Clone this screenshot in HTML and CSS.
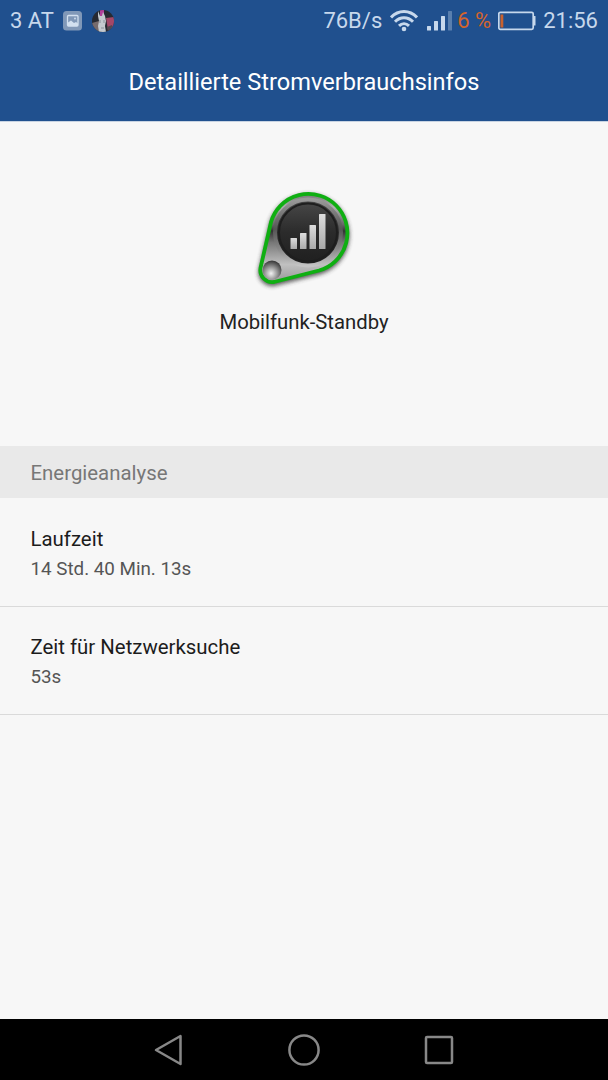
FILE: index.html
```html
<!DOCTYPE html>
<html lang="de">
<head>
    <meta charset="UTF-8">
    <meta name="viewport" content="width=device-width, initial-scale=1.0">
    <title>Detaillierte Stromverbrauchsinfos</title>
    <link rel="stylesheet" href="styles.css">
</head>
<body>
    <header class="header">
        <div class="status">
            <span class="carrier">3 AT</span>
            <svg class="gallery" width="20" height="20" viewBox="0 0 20 20">
                <rect x="0" y="0" width="19" height="19.500" rx="3.5" fill="#8098b8"/>
                <rect x="4.500" y="4.500" width="10.500" height="10.500" rx="1" fill="none" stroke="#d2e0f0" stroke-width="1.3"/>
                <path d="M5 11.500l3-2 3 2.500 2-1 2 1.500v2.500H5z" fill="#d2e0f0"/>
                <circle cx="12" cy="7.500" r="0.900" fill="#d2e0f0"/>
            </svg>
            <svg class="avatar" width="22" height="22" viewBox="0 0 22 22">
                <clipPath id="round"><circle cx="11" cy="11" r="11"/></clipPath>
                <g clip-path="url(#round)">
                    <rect width="22" height="22" fill="#262a32"/>
                    <path d="M14 8l8-1v10l-6 3z" fill="#a34768"/>
                    <path d="M0 13l7-2 2 11H0z" fill="#766b6c"/>
                    <path d="M8 0h4v7H8z" fill="#b0409a"/>
                    <path d="M6 1l2 5h2l1-4 2 4 1 5-1 5 1 6H7l-1-6 1-5-1-5z" fill="#c4c9cf"/>
                    <path d="M8 10v3M12 10v3M9 18h3" stroke="#8b929b" stroke-width="1"/>
                    <path d="M15 17l5-2v4l-4 3z" fill="#51484f"/>
                </g>
            </svg>
            <span class="speed">76B/s</span>
            <svg class="wifi" width="28" height="22" viewBox="0 0 28 22">
                <g fill="none" stroke="#c7d8ec" stroke-width="3">
                    <path d="M1 7.500C8.500 -0.500 19.500 -0.500 27 7.500"/>
                    <path d="M5 11.700c5.300-5.300 12.700-5.300 18 0"/>
                    <path d="M9 15.800c3-2.900 7-2.900 10 0"/>
                </g>
                <circle cx="14" cy="19" r="2.300" fill="#c7d8ec"/>
            </svg>
            <svg class="signal" width="25" height="20" viewBox="0 0 25 20">
                <g fill="#c7d8ec">
                    <rect x="0" y="15" width="4" height="4.500" rx="0.5"/>
                    <rect x="7" y="10" width="4" height="9.500" rx="0.5"/>
                    <rect x="14" y="5" width="4" height="14.500" rx="0.5"/>
                    <rect x="21" y="0" width="4" height="19.500" rx="0.5" opacity="0.35"/>
                </g>
            </svg>
            <span class="percent">6 %</span>
            <svg class="battery" width="38" height="20" viewBox="0 0 38 20">
                <rect x="0.800" y="1.300" width="34.400" height="17" rx="1.500" fill="none" stroke="#c7d8ec" stroke-width="1.700"/>
                <rect x="35.500" y="5" width="2" height="9.500" rx="0.500" fill="#c7d8ec"/>
                <rect x="2.500" y="3.500" width="2.800" height="13" fill="#c9622f"/>
            </svg>
            <span class="clock">21:56</span>
        </div>
        <h1 class="title">Detaillierte Stromverbrauchsinfos</h1>
    </header>
    <main class="content">
        <section class="app">
            <svg class="appIcon" width="110" height="120" viewBox="0 0 110 120">
                <defs>
                    <linearGradient id="metal" x1="0" y1="0" x2="0" y2="1">
                        <stop offset="0" stop-color="#777777"/>
                        <stop offset="0.15" stop-color="#b0b0b0"/>
                        <stop offset="0.35" stop-color="#666666"/>
                        <stop offset="0.42" stop-color="#333333"/>
                        <stop offset="0.55" stop-color="#777777"/>
                        <stop offset="0.8" stop-color="#c0c0c0"/>
                        <stop offset="1" stop-color="#999999"/>
                    </linearGradient>
                    <linearGradient id="ring" x1="0" y1="0" x2="0" y2="1">
                        <stop offset="0" stop-color="#9a9a9a"/>
                        <stop offset="0.45" stop-color="#555555"/>
                        <stop offset="0.75" stop-color="#888888"/>
                        <stop offset="1" stop-color="#c4c4c4"/>
                    </linearGradient>
                    <linearGradient id="dial" x1="0" y1="0" x2="0" y2="1">
                        <stop offset="0" stop-color="#464646"/>
                        <stop offset="0.5" stop-color="#2b2b2b"/>
                        <stop offset="1" stop-color="#202020"/>
                    </linearGradient>
                    <linearGradient id="bar" x1="0" y1="0" x2="0" y2="1">
                        <stop offset="0" stop-color="#dddddd"/>
                        <stop offset="1" stop-color="#aaaaaa"/>
                    </linearGradient>
                    <radialGradient id="knob" cx="0.45" cy="0.68" r="0.65">
                        <stop offset="0" stop-color="#f2f2f2"/>
                        <stop offset="0.5" stop-color="#999999"/>
                        <stop offset="1" stop-color="#3c3c3c"/>
                    </radialGradient>
                    <filter id="soft"><feGaussianBlur stdDeviation="2"/></filter>
                </defs>
                <path d="M10.500 88L21 42A39 39 0 1 1 69 90.500L24 102A12 12 0 0 1 10.500 88z" transform="translate(0 2)" fill="#333" stroke="#333" stroke-width="4" opacity="0.8" filter="url(#soft)"/>
                <path d="M10.500 88L21 42A39 39 0 1 1 69 90.500L24 102A12 12 0 0 1 10.500 88z" fill="url(#metal)" stroke="#0faf12" stroke-width="3.800"/>
                <circle cx="58" cy="52.500" r="33" fill="url(#dial)" stroke="url(#ring)" stroke-width="4"/>
                <circle cx="58" cy="52.500" r="29" fill="url(#dial)" stroke="#1e1e1e" stroke-width="2"/>
                <g fill="url(#bar)">
                    <rect x="40.500" y="58" width="6.500" height="11" rx="0.5"/>
                    <rect x="50" y="53" width="6.500" height="16" rx="0.5"/>
                    <rect x="59.500" y="45" width="6.500" height="24" rx="0.5"/>
                    <rect x="69" y="34" width="6.500" height="35" rx="0.5"/>
                </g>
                <circle cx="22" cy="90" r="9.500" fill="url(#knob)"/>
            </svg>
            <p class="appName">Mobilfunk-Standby</p>
        </section>
        <h2 class="sectionTitle">Energieanalyse</h2>
        <div class="item">
            <p class="itemName">Laufzeit</p>
            <p class="itemValue">14 Std. 40 Min. 13s</p>
        </div>
        <div class="item">
            <p class="itemName">Zeit für Netzwerksuche</p>
            <p class="itemValue">53s</p>
        </div>
    </main>
    <nav class="nav">
        <svg width="30" height="34" viewBox="0 0 30 34">
            <path d="M26.500 3v28L2 17z" fill="none" stroke="#888" stroke-width="2.500" stroke-linejoin="round"/>
        </svg>
        <svg width="34" height="34" viewBox="0 0 34 34">
            <circle cx="17" cy="17" r="14.600" fill="none" stroke="#888" stroke-width="2.500"/>
        </svg>
        <svg width="30" height="34" viewBox="0 0 30 34">
            <rect x="2" y="4" width="26" height="26" rx="1" fill="none" stroke="#888" stroke-width="2.500"/>
        </svg>
    </nav>
</body>
</html>
```
FILE: styles.css
```css
body{
    margin: 0;
    height: 1080px;
    display: flex;
    flex-direction: column;
    font-family: Roboto, sans-serif;
    background: #f7f7f7;
    overflow: hidden;
}
h1, h2, p{
    margin: 0;
    font-weight: 400;
}
svg{
    display: block;
    flex-shrink: 0;
}
.header{
    height: 122px;
    box-sizing: border-box;
    background: #20508e;
    border-bottom: 1px solid #c7d3e2;
}
.status{
    height: 42px;
    display: flex;
    align-items: center;
    padding: 0 10px;
    color: #c7d8ec;
    font-size: 22px;
    line-height: 42px;
    white-space: nowrap;
}
.carrier{
    width: 53px;
}
.avatar{
    margin-left: 9px;
}
.speed{
    margin-left: auto;
}
.wifi{
    margin-left: 8px;
}
.signal{
    margin-left: 9px;
}
.percent{
    margin-left: 5px;
    color: #d3642c;
}
.battery{
    margin-left: 7px;
}
.clock{
    margin-left: 7px;
}
.title{
    color: #fff;
    font-size: 23.6px;
    line-height: 80px;
    text-align: center;
}
.content{
    flex: 1;
}
.app{
    height: 324px;
    box-sizing: border-box;
    padding-top: 58px;
    display: flex;
    flex-direction: column;
    align-items: center;
}
.appIcon{
    margin-left: 2px;
}
.appName{
    margin-top: 8px;
    font-size: 20.3px;
    line-height: 28px;
    color: #222;
}
.sectionTitle{
    height: 52px;
    margin-bottom: 1px;
    padding-left: 30.5px;
    background: #e9e9e9;
    color: #777;
    font-size: 20.4px;
    line-height: 54px;
}
.item{
    height: 108px;
    box-sizing: border-box;
    padding: 26px 30.5px 0;
    border-bottom: 1px solid #dadada;
}
.itemName{
    font-size: 20.4px;
    line-height: 28px;
    color: #1c1c1c;
}
.itemValue{
    margin-top: 2px;
    font-size: 18.8px;
    line-height: 29px;
    color: #555;
}
.nav{
    height: 61px;
    background: #000;
    display: flex;
    justify-content: center;
    align-items: center;
    gap: 103px;
}
```
